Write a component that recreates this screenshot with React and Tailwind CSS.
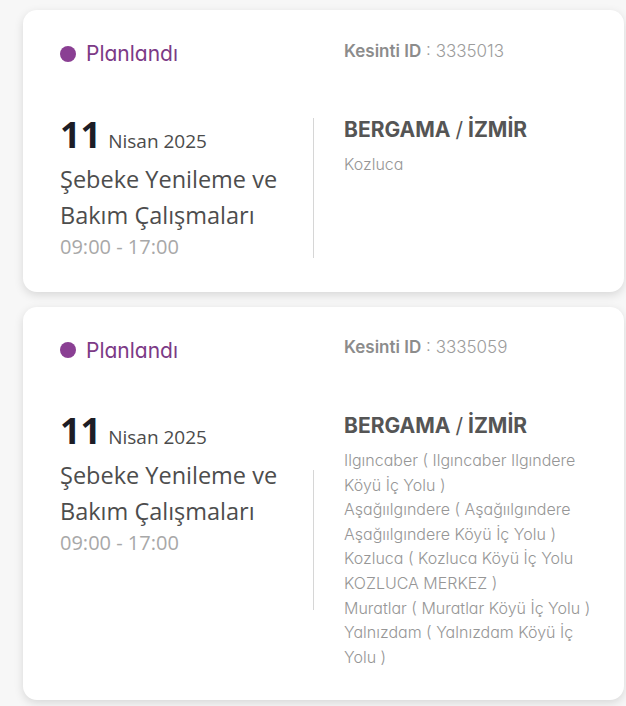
const outages = [
  {
    id: '3335013',
    day: '11',
    month: 'Nisan 2025',
    title: ['Şebeke Yenileme ve', 'Bakım Çalışmaları'],
    time: '09:00 - 17:00',
    place: 'BERGAMA / İZMİR',
    streets: ['Kozluca'],
  },
  {
    id: '3335059',
    day: '11',
    month: 'Nisan 2025',
    title: ['Şebeke Yenileme ve', 'Bakım Çalışmaları'],
    time: '09:00 - 17:00',
    place: 'BERGAMA / İZMİR',
    streets: [
      'Ilgıncaber ( Ilgıncaber Ilgındere Köyü İç Yolu )',
      'Aşağıılgındere ( Aşağıılgındere Aşağıılgındere Köyü İç Yolu )',
      'Kozluca ( Kozluca Köyü İç Yolu KOZLUCA MERKEZ )',
      'Muratlar ( Muratlar Köyü İç Yolu )',
      'Yalnızdam ( Yalnızdam Köyü İç Yolu )',
    ],
  },
];

const geo = "font-['Inter',sans-serif] [font-feature-settings:'cv11']";
const human = "font-['Open_Sans',sans-serif]";

function OutageCard({ item }) {
  return (
    <div className="bg-white rounded-[14px] shadow-[0_3px_10px_rgba(0,0,0,0.13)] pl-[37px] pr-[30px] pt-[28px] pb-[31px]">
      <div className="flex items-center">
        <div className={`w-[253px] flex items-center gap-[10px] text-[21px] text-[#7c3a86] ${geo}`}>
          <span className="h-[16px] w-[16px] rounded-full bg-[#8a3f93]" />
          Planlandı
        </div>
        <div className={`ml-[31px] -mt-[5px] text-[17px] font-light text-[#9c9c9c] ${geo}`}>
          <span className="font-semibold text-[#8c8c8c]">Kesinti ID</span> : {item.id}
        </div>
      </div>

      <div className="mt-[45px] flex">
        <div className={`w-[253px] shrink-0 ${human}`}>
          <div className="flex items-baseline gap-[7px] leading-[40px]">
            <span className="text-[36px] font-bold text-[#1d1d26]">{item.day}</span>
            <span className="text-[19px] text-[#4b4b4b]">{item.month}</span>
          </div>
          <div className="text-[23.5px] leading-[36px] text-[#4d4d4d]">
            {item.title.map((line) => (
              <div key={line}>{line}</div>
            ))}
          </div>
          <div className="text-[20px] leading-[28px] text-[#a8a8a8]">{item.time}</div>
        </div>

        <div className="self-center h-[140px] w-px bg-[#d6d6d6]" />

        <div className={`ml-[30px] flex-1 ${geo}`}>
          <div className="text-[21px] font-bold leading-[30px] text-[#555555]">
            BERGAMA <span className="font-normal">/</span> İZMİR
          </div>
          <div className="mt-[7px] text-[16px] font-light leading-[24.6px] text-[#969696]">
            {item.streets.map((s) => (
              <div key={s}>{s}</div>
            ))}
          </div>
        </div>
      </div>
    </div>
  );
}

export default function App() {
  return (
    <div className="min-h-screen bg-[#f7f7f7] pl-[23px] pr-[2px] pt-[10px] pb-[10px]">
      <div className="flex flex-col gap-[15px]">
        {outages.map((item) => (
          <OutageCard key={item.id} item={item} />
        ))}
      </div>
    </div>
  );
}
